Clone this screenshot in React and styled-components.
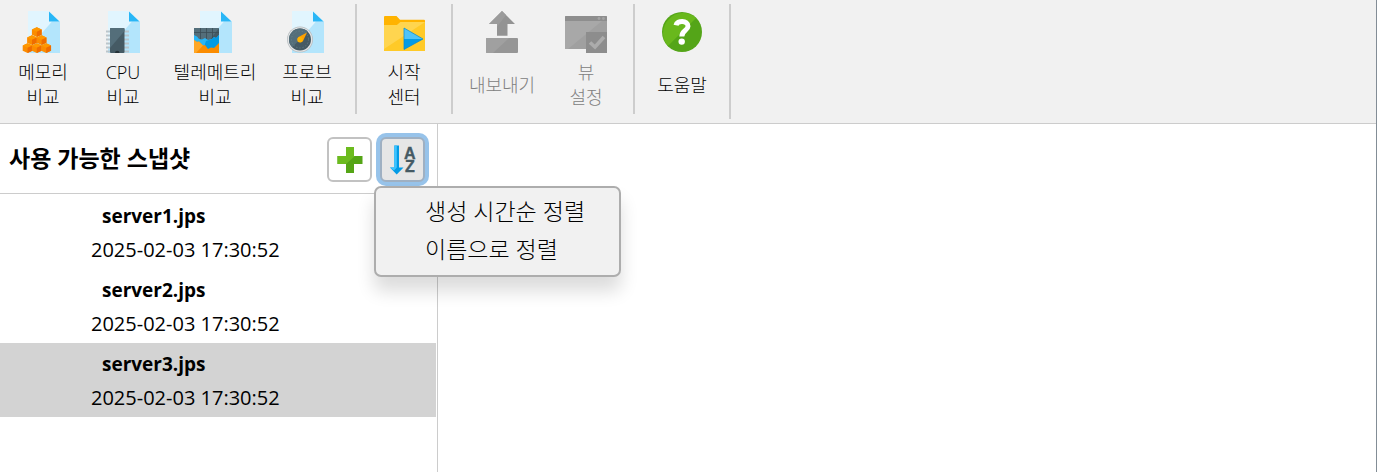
import React from "react";
import styled, { createGlobalStyle } from "styled-components";

const GlobalStyle = createGlobalStyle`
  *, *::before, *::after { box-sizing: border-box; }
  body { margin: 0; background: #ffffff; }
  body, button {
    font-family: "Open Sans", "Noto Sans CJK KR", sans-serif;
    font-weight: 400;
    color: #000000;
  }
`;

const Window = styled.div`
  display: flex;
  flex-direction: column;
  min-height: 100vh;
  border-right: 1px solid #838d96;
`;

const Toolbar = styled.header`
  display: flex;
  align-items: flex-start;
  padding: 4px 0;
  background: #f1f1f1;
  border-bottom: 1px solid #cccccc;
`;

const ToolGroup = styled.div`
  display: flex;
  padding-right: ${(p) => p.$end || 0}px;
`;

const Separator = styled.div`
  width: 2px;
  height: ${(p) => (p.$long ? 115 : 110)}px;
  background: #cdcdcd;
`;

const ToolButton = styled.button`
  display: flex;
  flex-direction: column;
  align-items: center;
  width: ${(p) => p.$width}px;
  padding: 7px 0 0;
  border: 0;
  background: none;
  font-size: 18px;
  font-weight: 300;
  line-height: 25px;
  &:disabled { color: #808080; }
`;

const ToolLabel = styled.span`
  display: flex;
  align-items: center;
  height: 50px;
  margin-top: 7px;
  text-align: center;
  white-space: pre;
`;

const Body = styled.div`
  display: flex;
  flex: 1;
`;

const Sidebar = styled.aside`
  width: 438px;
  border-right: 1px solid #cccccc;
`;

const Content = styled.main`
  flex: 1;
`;

const SidebarHeader = styled.div`
  display: flex;
  align-items: flex-start;
  gap: 8px;
  padding: 13px 12px 11px 9px;
  border-bottom: 1px solid #cccccc;
`;

const Title = styled.h2`
  flex: 1;
  margin: 0;
  font-size: 23px;
  line-height: 42px;
  font-weight: 600;
`;

const IconButton = styled.button`
  display: grid;
  place-items: center;
  width: 45px;
  height: 45px;
  padding: 0;
  border: 2px solid ${(p) => (p.$active ? "#9fb0c2" : "#c2c2c2")};
  border-radius: 6px;
  background: ${(p) => (p.$active ? "#e6e6e6" : "#ffffff")};
  box-shadow: ${(p) => (p.$active ? "0 0 0 4px #97c3ea" : "none")};
`;

const MenuAnchor = styled.div`
  position: relative;
`;

const Menu = styled.div`
  position: absolute;
  z-index: 1;
  top: 49px;
  left: -6px;
  display: flex;
  flex-direction: column;
  width: 247px;
  padding: 4px 0 7px;
  border: 2px solid #adadad;
  border-radius: 7px;
  background: #f1f1f1;
  box-shadow: 0 14px 18px rgba(0, 0, 0, 0.14);
`;

const MenuItem = styled.button`
  padding: 0 0 0 49px;
  border: 0;
  background: none;
  font-size: 23px;
  font-weight: 300;
  line-height: 38px;
  text-align: left;
  white-space: nowrap;
`;

const SnapshotList = styled.ul`
  margin: 0;
  padding: 1px 1px 0 0;
  list-style: none;
`;

const Snapshot = styled.li`
  padding: 5px 0 3px 91px;
  background: ${(p) => (p.$selected ? "#d3d3d3" : "transparent")};
  font-size: 20px;
  line-height: 33px;
`;

const SnapshotName = styled.div`
  padding-left: 11px;
  font-size: 19px;
  font-weight: 700;
`;

const Icon = ({ children, size = 42 }) => (
  <svg width={size} height={size} viewBox={`0 0 ${size} ${size}`} aria-hidden="true">
    {children}
  </svg>
);

const Page = () => (
  <>
    <path d="M6 0H27L38 10.5V42H6Z" fill="#e1f5fe" />
    <path d="M30 10.5H38V42H6V38Z" fill="#b3e5fc" />
    <path d="M27 0.5L37.5 10.5H27Z" fill="#29b6f6" />
  </>
);

const Cube = ({ x, y }) => (
  <g transform={`translate(${x} ${y})`}>
    <path d="M4.8 0L9.7 2.2V7.4L4.8 9.7L-0.1 7.4V2.2Z" fill="#fb8c00" />
    <path d="M4.8 0L9.6 2.2L4.8 4.4L0 2.2Z" fill="#ff9800" />
    <path d="M9.6 2.2L4.8 4.4V9.6L9.6 7.4Z" fill="#ef6c00" />
  </g>
);

const MemoryIcon = () => (
  <Icon>
    <Page />
    <Cube x={10} y={16.3} />
    <Cube x={5.2} y={24.3} />
    <Cube x={14.8} y={24.3} />
    <Cube x={0.8} y={32.3} />
    <Cube x={10} y={32.3} />
    <Cube x={19.4} y={32.3} />
  </Icon>
);

const CpuIcon = () => (
  <Icon>
    <Page />
    <path
      d="M4 20.5H27M4 24.5H27M4 28.5H27M4 32.5H27M4 36.5H27M4 40.5H27"
      stroke="#b9c5cb"
      strokeWidth="2"
    />
    <rect x="8" y="17" width="14.5" height="25" rx="1" fill="#455a64" />
    <path d="M9 17H21.5Q22.5 17 22.5 18V20L8 37V18Q8 17 9 17Z" fill="#546e7a" />
    <path d="M13 42A2.2 2.2 0 0 1 17.5 42Z" fill="#263238" />
  </Icon>
);

const TelemetryIcon = () => (
  <Icon>
    <Page />
    <rect x="0" y="17" width="25" height="25" rx="1" fill="#455a64" />
    <path d="M0 17H25L16 29H0Z" fill="#546e7a" />
    <path d="M6.5 17V30M12.5 17V30M18.5 17V30M0 21.5H25" stroke="#3b4d56" strokeWidth="0.8" />
    <path d="M0 24L3 25.5L5 28L8 28.5L11 27L14 29L18 28L20 26L22 27L25 24V42H0Z" fill="#29b6f6" />
    <path d="M12 30L18 28L20 26L22 27L25 24V42H8Z" fill="#039be5" />
    <path d="M0 29L3 31L5 30.5L9 34.5L11 34L14 38L17 36.5L20 37L25 32V42H0Z" fill="#fb8c00" />
    <path d="M0 29L3 31L5 30.5L9 34.5L2 42H0Z" fill="#ffa726" />
  </Icon>
);

const ProbeIcon = () => (
  <Icon>
    <Page />
    <circle cx="14" cy="28.5" r="13" fill="#b8bec1" />
    <circle cx="14" cy="28.5" r="12.2" fill="#e3e5e6" />
    <circle cx="14" cy="28.5" r="11" fill="#455a64" />
    <path d="M6.2 36.3A11 11 0 0 1 21.8 20.7Z" fill="#546e7a" />
    <circle cx="14" cy="28.5" r="8.5" fill="none" stroke="#6b838f" strokeWidth="1" strokeDasharray="1 2.2" />
    <path d="M21 21.5L17 30A3 3 0 1 1 12.5 26Z" fill="#ffa000" />
    <circle cx="14" cy="28.8" r="2.7" fill="#ffb300" />
  </Icon>
);

const StartCenterIcon = () => (
  <Icon>
    <path d="M1 6Q1 5 2 5H13.5L17 8.7H41Q42 8.7 42 9.7V14H1Z" fill="#ffb300" />
    <path d="M1 14H14L17.5 11H42V40H1Z" fill="#ffca28" />
    <path d="M1 14H14L17.5 11H42L1 38Z" fill="#ffd54f" />
    <path d="M21 17L40 28H21Z" fill="#4fc3f7" />
    <path d="M21 28H40L21 38.5Z" fill="#039be5" />
    <path d="M21 17L40 28L21 38.5Z" fill="none" stroke="#0288d1" strokeWidth="0.7" />
  </Icon>
);

const ExportIcon = () => (
  <Icon>
    <path d="M21 0L34 13H26.5V24.7H16V13H8Z" fill="#939393" />
    <path d="M21 0L25 4L16 16V13H8Z" fill="#9b9b9b" />
    <rect x="5" y="27" width="32" height="15" rx="1" fill="#969696" />
    <path d="M6 27H28L12 42H6Q5 42 5 41V28Q5 27 6 27Z" fill="#a0a0a0" />
  </Icon>
);

const ViewSettingsIcon = () => (
  <Icon>
    <rect x="0" y="5" width="42" height="33" rx="1" fill="#a0a0a0" />
    <path d="M0 10H37L3 38H0Z" fill="#a8a8a8" />
    <path d="M0 6Q0 5 1 5H41Q42 5 42 6V10H0Z" fill="#8e8e8e" />
    <circle cx="34" cy="7.5" r="1.4" fill="#a4a4a4" />
    <circle cx="38.4" cy="7.5" r="1.4" fill="#a4a4a4" />
    <rect x="21" y="21" width="21" height="21" fill="#8d8d8d" />
    <path d="M25 31.5L30 36L39 26" fill="none" stroke="#acacac" strokeWidth="3.6" />
  </Icon>
);

const HelpIcon = () => (
  <Icon>
    <circle cx="21" cy="21" r="20" fill="#54a518" />
    <path d="M6.9 35.1A20 20 0 0 1 35.1 6.9Z" fill="#69b81c" />
    <path
      d="M15 14.2C16 9 27 9 27 15.2C27 19.5 20.8 19.5 20.8 25.5"
      fill="none"
      stroke="#ffffff"
      strokeWidth="5"
    />
    <circle cx="20.7" cy="30.6" r="3.2" fill="#ffffff" />
  </Icon>
);

const PlusIcon = () => (
  <Icon size={26}>
    <path d="M9 0H17V9H25.5V17H17V26H9V17H0.5V9H9Z" fill="#55a516" />
    <path d="M9 0H17V9H18L9 17H0.5V9H9Z" fill="#6cbb1e" />
  </Icon>
);

const IconLetter = styled.text`
  font: 700 16px "Liberation Sans", sans-serif;
  fill: #455a64;
  stroke: #455a64;
  stroke-width: 0.4px;
`;

const SortIcon = () => (
  <Icon size={30}>
    <path d="M6.3 0.5H11V22.5H15.5L8.7 29.5L2 22.5H6.3Z" fill="#039be5" />
    <path d="M6.3 0.5H8.8V22.5L6 25.5L2 22.5H6.3Z" fill="#40c4ff" />
    <IconLetter x="16" y="14">A</IconLetter>
    <IconLetter x="17" y="27">Z</IconLetter>
  </Icon>
);

const toolGroups = [
  {
    end: 11,
    tools: [
      { label: "메모리\n비교", width: 86, icon: MemoryIcon },
      { label: "CPU\n비교", width: 74, icon: CpuIcon },
      { label: "텔레메트리\n비교", width: 110, icon: TelemetryIcon },
      { label: "프로브\n비교", width: 74, icon: ProbeIcon },
    ],
  },
  { tools: [{ label: "시작\n센터", width: 94, icon: StartCenterIcon }] },
  {
    end: 12,
    tools: [
      { label: "내보내기", width: 98, icon: ExportIcon, disabled: true },
      { label: "뷰\n설정", width: 70, icon: ViewSettingsIcon, disabled: true },
    ],
  },
  { long: true, tools: [{ label: "도움말", width: 94, icon: HelpIcon }] },
];

const snapshots = [
  { name: "server1.jps", time: "2025-02-03 17:30:52" },
  { name: "server2.jps", time: "2025-02-03 17:30:52" },
  { name: "server3.jps", time: "2025-02-03 17:30:52", selected: true },
];

export default function App() {
  return (
    <Window>
      <GlobalStyle />
      <Toolbar>
        {toolGroups.map((group, index) => (
          <React.Fragment key={index}>
            <ToolGroup $end={group.end}>
              {group.tools.map(({ label, width, icon: Glyph, disabled }) => (
                <ToolButton key={label} type="button" $width={width} disabled={disabled}>
                  <Glyph />
                  <ToolLabel>{label}</ToolLabel>
                </ToolButton>
              ))}
            </ToolGroup>
            <Separator $long={group.long} />
          </React.Fragment>
        ))}
      </Toolbar>
      <Body>
        <Sidebar>
          <SidebarHeader>
            <Title>사용 가능한 스냅샷</Title>
            <IconButton type="button" aria-label="스냅샷 추가">
              <PlusIcon />
            </IconButton>
            <MenuAnchor>
              <IconButton type="button" aria-label="정렬" aria-haspopup="menu" aria-expanded="true" $active>
                <SortIcon />
              </IconButton>
              <Menu role="menu">
                <MenuItem type="button" role="menuitem">생성 시간순 정렬</MenuItem>
                <MenuItem type="button" role="menuitem">이름으로 정렬</MenuItem>
              </Menu>
            </MenuAnchor>
          </SidebarHeader>
          <SnapshotList>
            {snapshots.map((item) => (
              <Snapshot key={item.name} $selected={item.selected}>
                <SnapshotName>{item.name}</SnapshotName>
                <time>{item.time}</time>
              </Snapshot>
            ))}
          </SnapshotList>
        </Sidebar>
        <Content />
      </Body>
    </Window>
  );
}
